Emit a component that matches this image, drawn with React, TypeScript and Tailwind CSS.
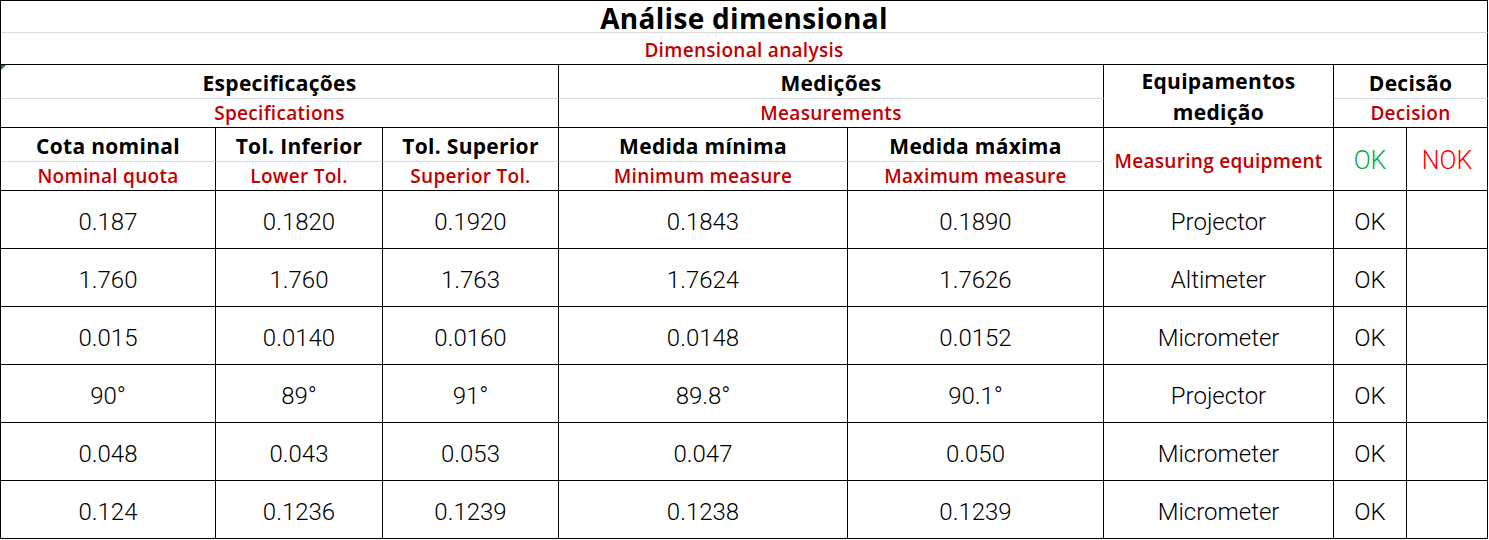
import React from 'react'

const head = "font-['Open_Sans',sans-serif]"
const body = "font-['Roboto',sans-serif]"

// vertical separators: black. light gridlines: excel gray
const cell = 'flex items-center justify-center border-r border-b border-black'
const topHalf = 'flex items-end justify-center border-r border-b border-b-[#dadada] border-r-black'
const botHalf = 'flex items-end justify-center border-r border-b border-black'

const ptText = `${head} text-[21px] font-bold leading-[30px] tracking-[0.3px] text-black`
const enText = `${head} text-[19px] font-semibold leading-[26px] tracking-[0.3px] text-[#c00000]`

const rows = [
  ['0.187', '0.1820', '0.1920', '0.1843', '0.1890', 'Projector', 'OK'],
  ['1.760', '1.760', '1.763', '1.7624', '1.7626', 'Altimeter', 'OK'],
  ['0.015', '0.0140', '0.0160', '0.0148', '0.0152', 'Micrometer', 'OK'],
  ['90°', '89°', '91°', '89.8°', '90.1°', 'Projector', 'OK'],
  ['0.048', '0.043', '0.053', '0.047', '0.050', 'Micrometer', 'OK'],
  ['0.124', '0.1236', '0.1239', '0.1238', '0.1239', 'Micrometer', 'OK'],
]

const subHeads = [
  ['Cota nominal', 'Nominal quota'],
  ['Tol. Inferior', 'Lower Tol.'],
  ['Tol. Superior', 'Superior Tol.'],
  ['Medida mínima', 'Minimum measure'],
  ['Medida máxima', 'Maximum measure'],
]

export default function App() {
  return (
    <div className="h-[540px] w-[1489px] bg-white">
      <div className="relative grid w-[1488px] grid-cols-[215px_167px_176px_289px_256px_230px_73px_81px] grid-rows-[32px_32px_34px_29px_34px_29px_repeat(6,58px)] border-l border-t border-black">
        {/* excel error marker */}
        <div className="absolute left-0 top-[64px] h-0 w-0 border-r-[5px] border-t-[5px] border-r-transparent border-t-[#217346]" />

        {/* Title */}
        <div className={`${topHalf} col-span-8`}>
          <span className={`${head} text-[28px] font-bold leading-[28px] tracking-[0.3px] text-black`}>Análise dimensional</span>
        </div>
        <div className={`${botHalf} col-span-8 pb-[1px]`}>
          <span className={enText}>Dimensional analysis</span>
        </div>

        {/* Group headers */}
        <div className={`${topHalf} col-span-3`}>
          <span className={ptText}>Especificações</span>
        </div>
        <div className={`${topHalf} col-span-2`}>
          <span className={ptText}>Medições</span>
        </div>
        <div className={`${cell} row-span-2 flex-col pt-[2px]`}>
          <span className={`${ptText} leading-[31px]`}>Equipamentos</span>
          <span className={`${ptText} leading-[31px]`}>medição</span>
        </div>
        <div className={`${topHalf} col-span-2`}>
          <span className={ptText}>Decisão</span>
        </div>
        <div className={`${botHalf} col-span-3 pb-[1px]`}>
          <span className={enText}>Specifications</span>
        </div>
        <div className={`${botHalf} col-span-2 pb-[1px]`}>
          <span className={enText}>Measurements</span>
        </div>
        <div className={`${botHalf} col-span-2 pb-[1px]`}>
          <span className={enText}>Decision</span>
        </div>

        {/* Column headers */}
        {subHeads.map(([pt], i) => (
          <div key={pt} className={topHalf} style={{ gridColumnStart: i + 1, gridRowStart: 5 }}>
            <span className={ptText}>{pt}</span>
          </div>
        ))}
        {subHeads.map(([, en], i) => (
          <div key={en} className={`${botHalf} pb-[1px]`} style={{ gridColumnStart: i + 1, gridRowStart: 6 }}>
            <span className={enText}>{en}</span>
          </div>
        ))}
        <div className={`${cell} row-span-2 pt-[4px]`} style={{ gridColumnStart: 6, gridRowStart: 5 }}>
          <span className={enText}>Measuring equipment</span>
        </div>
        <div className={`${cell} row-span-2 pt-[4px]`} style={{ gridColumnStart: 7, gridRowStart: 5 }}>
          <span className={`${body} text-[25px] font-light text-[#00b050]`}>OK</span>
        </div>
        <div className={`${cell} row-span-2 pt-[4px]`} style={{ gridColumnStart: 8, gridRowStart: 5 }}>
          <span className={`${body} text-[25px] font-light text-[#ff0000]`}>NOK</span>
        </div>

        {/* Data */}
        {rows.map((r, ri) => (
          <React.Fragment key={ri}>
            {r.map((v, ci) => (
              <div key={ci} className={`${cell} pt-[4px]`}>
                <span className={`${body} text-[24px] font-light text-black`}>{v}</span>
              </div>
            ))}
            <div className={cell} />
          </React.Fragment>
        ))}
      </div>
    </div>
  )
}
